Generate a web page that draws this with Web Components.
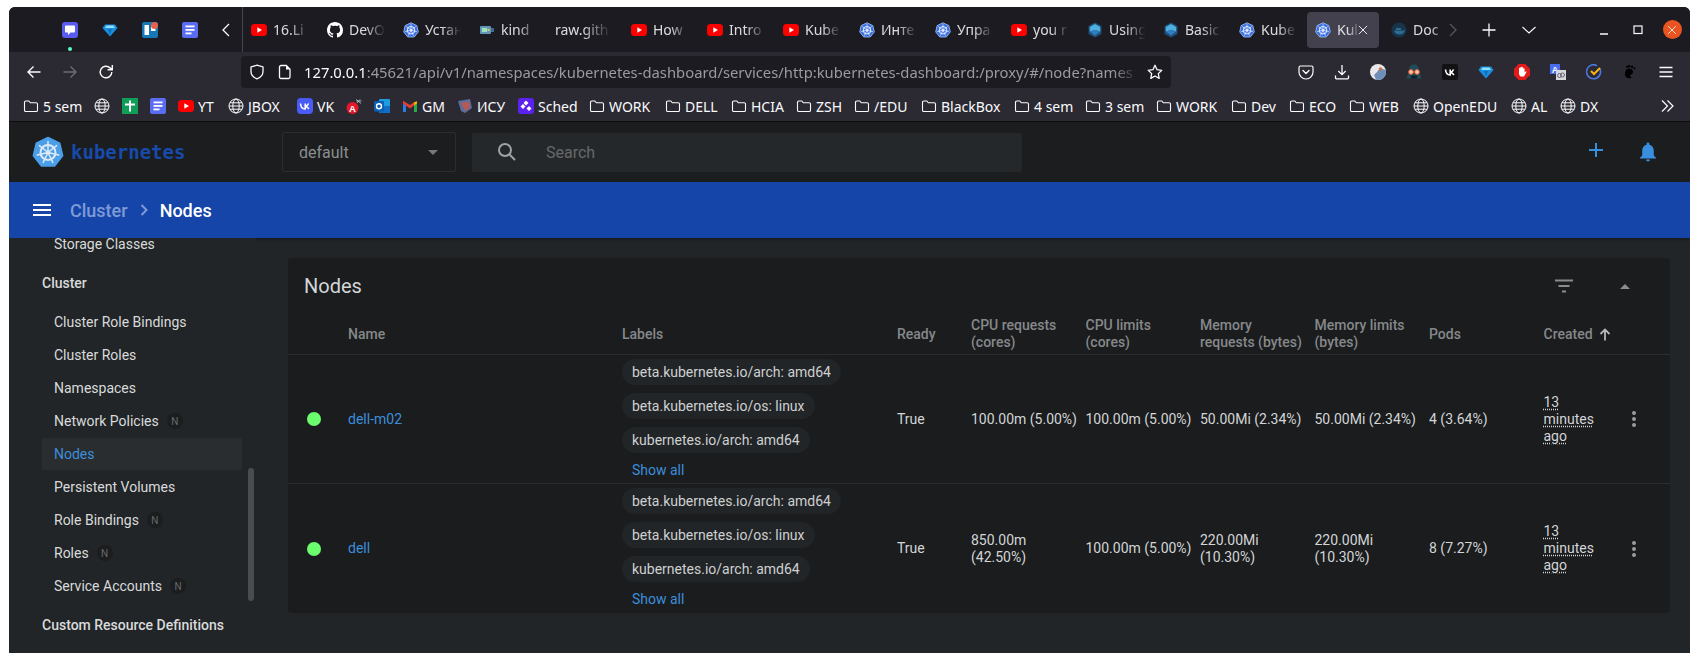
<!DOCTYPE html>
<html>
<head>
<meta charset="utf-8">
<title>Nodes - Kubernetes Dashboard</title>
<style>
    html, body { margin: 0; height: 100%; background: #fff; overflow: hidden; }
    body { padding: 7px 0 0 9px; box-sizing: border-box; }
</style>
</head>
<body>
<browser-window>
    <tab-strip>
        <browser-tab icon="yt">16.Li</browser-tab>
        <browser-tab icon="github">DevO</browser-tab>
        <browser-tab icon="k8s">Устан</browser-tab>
        <browser-tab icon="kind">kind</browser-tab>
        <browser-tab>raw.gith</browser-tab>
        <browser-tab icon="yt">How</browser-tab>
        <browser-tab icon="yt">Intro</browser-tab>
        <browser-tab icon="yt">Kube</browser-tab>
        <browser-tab icon="k8s">Инте</browser-tab>
        <browser-tab icon="k8s">Упра</browser-tab>
        <browser-tab icon="yt">you r</browser-tab>
        <browser-tab icon="cube">Using</browser-tab>
        <browser-tab icon="cube">Basic</browser-tab>
        <browser-tab icon="k8s">Kube</browser-tab>
        <browser-tab icon="k8s" active>Kul</browser-tab>
        <browser-tab icon="docker">Doc</browser-tab>
    </tab-strip>
    <nav-bar></nav-bar>
    <bookmark-bar>
        <book-mark icon="folder" w="39">5 sem</book-mark>
        <book-mark icon="globe"></book-mark>
        <book-mark icon="tasks"></book-mark>
        <book-mark icon="docs"></book-mark>
        <book-mark icon="yt" w="18">YT</book-mark>
        <book-mark icon="globe" w="37">JBOX</book-mark>
        <book-mark icon="vk" w="17">VK</book-mark>
        <book-mark icon="acro"></book-mark>
        <book-mark icon="outlook"></book-mark>
        <book-mark icon="gmail" w="23">GM</book-mark>
        <book-mark icon="isu" w="29">ИСУ</book-mark>
        <book-mark icon="sched" w="39">Sched</book-mark>
        <book-mark icon="folder" w="44">WORK</book-mark>
        <book-mark icon="folder" w="34">DELL</book-mark>
        <book-mark icon="folder" w="33">HCIA</book-mark>
        <book-mark icon="folder" w="26">ZSH</book-mark>
        <book-mark icon="folder" w="35">/EDU</book-mark>
        <book-mark icon="folder" w="61">BlackBox</book-mark>
        <book-mark icon="folder" w="39">4 sem</book-mark>
        <book-mark icon="folder" w="39">3 sem</book-mark>
        <book-mark icon="folder" w="43">WORK</book-mark>
        <book-mark icon="folder" w="26">Dev</book-mark>
        <book-mark icon="folder" w="28">ECO</book-mark>
        <book-mark icon="folder" w="32">WEB</book-mark>
        <book-mark icon="globe" w="66">OpenEDU</book-mark>
        <book-mark icon="globe" w="17">AL</book-mark>
        <book-mark icon="globe" w="19">DX</book-mark>
    </bookmark-bar>
    <kd-header></kd-header>
    <kd-toolbar></kd-toolbar>
    <kd-body>
        <kd-sidebar slot="side">
            <side-item>Storage Classes</side-item>
            <side-item heading>Cluster</side-item>
            <side-item>Cluster Role Bindings</side-item>
            <side-item>Cluster Roles</side-item>
            <side-item>Namespaces</side-item>
            <side-item badge>Network Policies</side-item>
            <side-item active>Nodes</side-item>
            <side-item>Persistent Volumes</side-item>
            <side-item badge>Role Bindings</side-item>
            <side-item badge>Roles</side-item>
            <side-item badge>Service Accounts</side-item>
            <side-item heading>Custom Resource Definitions</side-item>
        </kd-sidebar>
        <node-card>
            <node-row name="dell-m02" cpu-req="100.00m (5.00%)" cpu-lim="100.00m (5.00%)" mem-req="50.00Mi (2.34%)" mem-lim="50.00Mi (2.34%)" pods="4 (3.64%)"></node-row>
            <node-row name="dell" cpu-req="850.00m (42.50%)" cpu-lim="100.00m (5.00%)" mem-req="220.00Mi (10.30%)" mem-lim="220.00Mi (10.30%)" pods="8 (7.27%)"></node-row>
        </node-card>
    </kd-body>
</browser-window>

<script>
const K8S_WHEEL = (color) => `
    <circle cx="16" cy="16.5" r="7.5" fill="none" stroke="${color}" stroke-width="2"/>
    <circle cx="16" cy="16.5" r="2" fill="${color}"/>
    <path d="M16 16.5V5.5M16 16.5L24.6 9.65M16 16.5L26.7 19M16 16.5L20.8 26.4M16 16.5L11.2 26.4M16 16.5L5.3 19M16 16.5L7.4 9.65" stroke="${color}" stroke-width="1.5" stroke-linecap="round"/>`;
const HEPTAGON = 'M16 1.5L27.7 7.15L30.6 19.8L22.5 30H9.5L1.4 19.8L4.3 7.15Z';
const VK_MARK = 'M3.5 5.5c.3 3.4 2 5.5 4.7 5.5V5.5M8.4 8.2c1.5-.2 2.6-1.3 3.2-2.7M8.4 8.2c1.6.2 2.7 1.3 3.5 2.8';

const ICONS = {
    chat: `<rect width="16" height="16" rx="3" fill="#5a5cf0"/><path d="M4 3.5h8a1 1 0 0 1 1 1v5a1 1 0 0 1-1 1H8.5L6 13v-2.5H4a1 1 0 0 1-1-1v-5a1 1 0 0 1 1-1z" fill="#fff"/>`,
    diamond: `<path d="M3 2.5h10l2.5 3.5L8 14.5.5 6z" fill="#1a8fdf"/><path d="M4.5 3.5h7L13 6H3z" fill="#8fe0ff"/><path d="M6 7h4L8 12.5z" fill="#0c6fc0"/>`,
    trello: `<rect width="16" height="16" rx="2" fill="#1577b5"/><rect x="2.5" y="3" width="4.5" height="10" fill="#fff"/><rect x="9" y="3" width="4.5" height="6" fill="#fff"/><circle cx="12.5" cy="3.5" r="3.5" fill="#e8604c"/>`,
    docs: `<rect width="16" height="16" rx="2" fill="#5a6cf2"/><rect x="3.5" y="3.5" width="9" height="1.8" fill="#fff"/><rect x="3.5" y="7" width="9" height="1.8" fill="#fff"/><rect x="3.5" y="10.5" width="6" height="1.8" fill="#fff"/>`,
    yt: `<rect y="2" width="16" height="12" rx="3.5" fill="#f00"/><path d="M6.3 5.2L11 8L6.3 10.8z" fill="#fff"/>`,
    github: `<path fill="#fff" d="M8 0C3.58 0 0 3.58 0 8c0 3.54 2.29 6.53 5.47 7.59.4.07.55-.17.55-.38 0-.19-.01-.82-.01-1.49-2.01.37-2.53-.49-2.69-.94-.09-.23-.48-.94-.82-1.13-.28-.15-.68-.52-.01-.53.63-.01 1.08.58 1.23.82.72 1.21 1.87.87 2.33.66.07-.52.28-.87.51-1.07-1.78-.2-3.64-.89-3.64-3.95 0-.87.31-1.59.82-2.15-.08-.2-.36-1.02.08-2.12 0 0 .67-.21 2.2.82.64-.18 1.32-.27 2-.27.68 0 1.36.09 2 .27 1.53-1.04 2.2-.82 2.2-.82.44 1.1.16 1.92.08 2.12.51.56.82 1.27.82 2.15 0 3.07-1.87 3.75-3.65 3.95.29.25.54.73.54 1.48 0 1.07-.01 1.93-.01 2.2 0 .21.15.46.55.38A8.013 8.013 0 0016 8c0-4.42-3.58-8-8-8z"/>`,
    k8s: `<svg viewBox="0 0 32 32" width="16" height="16"><path d="${HEPTAGON}" fill="#3a6fe2" stroke="#a9c6f7" stroke-width="1.6" stroke-linejoin="round"/>${K8S_WHEEL('#eaf1fe')}</svg>`,
    logo: `<svg viewBox="0 0 32 32" width="32" height="32"><path d="${HEPTAGON}" fill="#4b9fe9" stroke="#4b9fe9" stroke-width="1.6" stroke-linejoin="round"/>${K8S_WHEEL('#dfe9f5')}</svg>`,
    kind: `<rect x="1" y="4" width="11" height="8" rx="1" fill="#5f97b5"/><rect x="3" y="6" width="5" height="4" fill="#9fe0c0"/><rect x="12" y="6" width="3" height="4" fill="#3d6d8a"/><rect x="8.5" y="7" width="2" height="2" fill="#e8c860"/>`,
    cube: `<path d="M8 .5L14.5 4v8L8 15.5 1.5 12V4z" fill="#1f4f7a"/><path d="M8 2l5.2 3v4.4L8 8 2.8 9.4V5z" fill="#4fb0e0"/><path d="M2.8 9.4L8 8l5.2 1.4L8 13.5z" fill="#2f7fc0"/>`,
    docker: `<circle cx="8" cy="8" r="7.6" fill="#16344a"/><path d="M3 8.5h9.5c.8 0 1.2-.6 1.5-1-.1 3-2.6 5-5.5 5S3.5 11 3 8.5z" fill="#2f6a8f"/><rect x="5" y="6" width="5" height="2" fill="#2f6a8f"/>`,
    folder: `<path d="M1.5 4.3a1.3 1.3 0 0 1 1.3-1.3h3l1.5 1.8h5.9a1.3 1.3 0 0 1 1.3 1.3v6.1a1.3 1.3 0 0 1-1.3 1.3H2.8a1.3 1.3 0 0 1-1.3-1.3z" fill="none" stroke="#fbfbfe" stroke-width="1.1"/>`,
    globe: `<g fill="none" stroke="#fbfbfe" stroke-width="1"><circle cx="8" cy="8" r="7"/><ellipse cx="8" cy="8" rx="3.2" ry="7"/><path d="M1 8h14M2 4.8h12M2 11.2h12"/></g>`,
    tasks: `<rect width="16" height="16" fill="#0f9d58"/><rect x="7" y="2.5" width="2" height="11" fill="#fff"/><rect x="3" y="5.5" width="10" height="2" fill="#fff"/>`,
    vk: `<rect width="16" height="16" rx="4" fill="#4a5cf8"/><path d="${VK_MARK}" fill="none" stroke="#fff" stroke-width="1.5"/>`,
    acro: `<circle cx="6.5" cy="10" r="6" fill="#e5172b"/><text x="6.5" y="13.5" font-size="9.5" font-weight="700" font-family="Liberation Sans" text-anchor="middle" fill="#fff">A</text><path d="M10 1.5l5 4M11 5l3-3.5M10.5 3h5" stroke="#c9c9c9" stroke-width=".8"/>`,
    outlook: `<rect x="5" y="1" width="11" height="14" rx="1" fill="#1f9be0"/><rect x="5" y="8" width="11" height="7" fill="#0f6fc6"/><rect y="3" width="10" height="10.5" rx="1" fill="#0a5fb4"/><circle cx="5" cy="8.2" r="2.5" fill="none" stroke="#fff" stroke-width="1.4"/>`,
    gmail: `<path d="M1 4.5V14h3V7.5z" fill="#2c7ce5"/><path d="M12 7.5V14h3V4.5z" fill="#2ba84a"/><path d="M1 2.8v2.7L8 10.5l4-3V4.2L8 7z" fill="#e43d30"/><path d="M12 4.2v3.3l3-2V3.2z" fill="#f5b400"/>`,
    isu: `<path d="M1 3L13 1l2 9-7 5-4-2z" fill="#5a6e9c"/><path d="M4 5l8-1.5 1 6L8 13z" fill="#b65a55"/>`,
    sched: `<rect width="16" height="16" rx="3" fill="#5a21ef"/><path d="M8 2.5l2.5 2.5L8 7.5 5.5 5zM5 6l2.5 2.5L5 11 2.5 8.5zM11 8l2.5 2.5L11 13 8.5 10.5z" fill="#fff"/>`,
    back: `<path d="M14.5 8H2M7.5 2.5L2 8l5.5 5.5" fill="none" stroke="#fbfbfe" stroke-width="1.4"/>`,
    forward: `<path d="M1.5 8H14M8.5 2.5L14 8l-5.5 5.5" fill="none" stroke="#6d6d75" stroke-width="1.4"/>`,
    reload: `<path d="M13.8 8a5.8 5.8 0 1 1-1.7-4.1L14 5.5M14.3 1v4.7H9.6" fill="none" stroke="#fbfbfe" stroke-width="1.4"/>`,
    shield: `<path d="M8 1.2l6 1.8v4.5c0 3.6-2.5 6-6 7.3-3.5-1.3-6-3.7-6-7.3V3z" fill="none" stroke="#fbfbfe" stroke-width="1.3"/>`,
    page: `<path d="M4 1.5h5.3L13 5.2V13a1.5 1.5 0 0 1-1.5 1.5H4A1.5 1.5 0 0 1 2.5 13V3A1.5 1.5 0 0 1 4 1.5z" fill="none" stroke="#fbfbfe" stroke-width="1.3"/><path d="M9 1.5l4 4H9z" fill="#fbfbfe"/>`,
    star: `<path d="M8 1.3l2.05 4.4 4.75.6-3.5 3.3.9 4.8L8 12.05 3.8 14.4l.9-4.8-3.5-3.3 4.75-.6z" fill="none" stroke="#fbfbfe" stroke-width="1.3" stroke-linejoin="round"/>`,
    pocket: `<path d="M2.5 2h11A1.5 1.5 0 0 1 15 3.5V8A7 7 0 0 1 1 8V3.5A1.5 1.5 0 0 1 2.5 2z" fill="none" stroke="#fbfbfe" stroke-width="1.2"/><path d="M5 6.5l3 3 3-3" fill="none" stroke="#fbfbfe" stroke-width="1.4" stroke-linecap="round"/>`,
    download: `<path d="M8 1v9.5M4.3 7L8 10.7 11.7 7M1.5 11.5V14a.8.8 0 0 0 .8.8h11.4a.8.8 0 0 0 .8-.8v-2.5" fill="none" stroke="#fbfbfe" stroke-width="1.3"/>`,
    photo: `<circle cx="8" cy="8" r="8" fill="#e8e8ea"/><path d="M8 16c4.4 0 8-3.6 8-8 0-.7-.1-1.3-.3-2L10 4 7 8l-3 3 2 4.8z" fill="#6f8fb8"/><circle cx="10.5" cy="5" r="1.8" fill="#c8734f"/>`,
    owl: `<path d="M8 .5c3.5 0 5 2.5 5 5.5l2.5 8.5h-15L3 6c0-3 1.5-5.5 5-5.5z" fill="#1e4c58"/><circle cx="5" cy="8" r="2.4" fill="#f2c8a8" stroke="#e0502c" stroke-width="1"/><circle cx="11" cy="8" r="2.4" fill="#f2c8a8" stroke="#e0502c" stroke-width="1"/><rect x="5" y="11.5" width="6" height="3" fill="#0f2228"/>`,
    vkdark: `<rect width="16" height="16" rx="2" fill="#121214"/><path d="${VK_MARK}" fill="none" stroke="#fff" stroke-width="1.6"/>`,
    stop: `<path d="M4.7 0h6.6L16 4.7v6.6L11.3 16H4.7L0 11.3V4.7z" fill="#e21a1a"/><path d="M5 7V4.5a.7.7 0 0 1 1.4 0v-1a.7.7 0 0 1 1.4 0v.2a.7.7 0 0 1 1.4 0V5a.7.7 0 0 1 1.4 0v3.5l1-1c.6-.4 1.2.2.8.8L10 12.5H6.5L5 10.5z" fill="#fff"/>`,
    translate: `<rect x="0" y="0" width="10" height="10" fill="#4a6cf0"/><text x="5" y="8.5" font-size="9" font-weight="700" font-family="Liberation Sans" text-anchor="middle" fill="#fff">A</text><rect x="6" y="6" width="10" height="10" fill="#d6d8da"/><circle cx="9.5" cy="11.5" r="2" fill="none" stroke="#667" stroke-width="1"/><circle cx="12.5" cy="11" r="2" fill="none" stroke="#667" stroke-width="1"/>`,
    tick: `<path d="M14 5A7 7 0 1 1 10.5 1.4" fill="none" stroke="#4a78e0" stroke-width="1.6" stroke-linecap="round"/><path d="M5 7l3 3 6-6" fill="none" stroke="#f7b21a" stroke-width="2"/>`,
    gnome: `<path d="M6.5 4.5c2.5 0 5 1.5 4.5 4-.4 1.8-2.5 1.6-2.8 3-.3 1.3 1.3 1.7 1.8 1.5-1.2 1.5-5 2-6.5-.7-1.6-3 .5-7.8 3-7.8z" fill="#000"/><circle cx="7" cy="2.3" r="1.3" fill="#000"/><circle cx="10" cy="2.8" r="1.2" fill="#000"/><circle cx="12.4" cy="4.3" r="1.1" fill="#000"/><circle cx="4.8" cy="2.8" r="1" fill="#000"/>`,
    menu: `<path d="M1.5 3.5h13M1.5 8h13M1.5 12.5h13" stroke="#fbfbfe" stroke-width="1.4"/>`,
    left: `<path d="M11 2L5 8l6 6" fill="none" stroke="#fbfbfe" stroke-width="1.3"/>`,
    right: `<path d="M5 2l6 6-6 6" fill="none" stroke="#55555c" stroke-width="1.3"/>`,
    plus: `<path d="M8 1.5v13M1.5 8h13" stroke="#fbfbfe" stroke-width="1.3"/>`,
    down: `<path d="M1.5 5L8 11l6.5-6" fill="none" stroke="#fbfbfe" stroke-width="1.1"/>`,
    close: `<path d="M2.5 2.5l11 11M13.5 2.5l-11 11" stroke="#fbfbfe" stroke-width="1.2"/>`,
    min: `<path d="M4 12h8" stroke="#fbfbfe" stroke-width="1.4"/>`,
    max: `<rect x="4" y="4" width="8" height="7.5" fill="none" stroke="#fbfbfe" stroke-width="1.2"/>`,
    chevrons: `<path d="M2 2.5L7.5 8 2 13.5M7.5 2.5L13 8l-5.5 5.5" fill="none" stroke="#fbfbfe" stroke-width="1.2"/>`,
};

class AppIcon extends HTMLElement {
    constructor() {
        super();
        this.attachShadow({ mode: 'open' });
    }

    connectedCallback() {
        const body = ICONS[this.getAttribute('name')] || '';
        const inner = body.startsWith('<svg') ? body : `<svg viewBox="0 0 16 16" width="16" height="16">${body}</svg>`;
        this.shadowRoot.innerHTML = `
            <style>
                :host { display: inline-flex; align-items: center; justify-content: center; flex: none; }
                svg { display: block; }
            </style>
            ${inner}
        `;
    }
}
customElements.define('app-icon', AppIcon);

class BrowserWindow extends HTMLElement {
    constructor() {
        super();
        this.attachShadow({ mode: 'open' });
        this.shadowRoot.innerHTML = `
            <style>
                :host {
                    display: flex;
                    flex-direction: column;
                    width: 1681px;
                    height: 646px;
                    border-radius: 6px 6px 0 0;
                    overflow: hidden;
                    background: #212527;
                }
            </style>
            <slot></slot>
        `;
    }
}
customElements.define('browser-window', BrowserWindow);

class TabStrip extends HTMLElement {
    constructor() {
        super();
        this.attachShadow({ mode: 'open' });
        this.shadowRoot.innerHTML = `
            <style>
                :host {
                    display: flex;
                    align-items: center;
                    height: 45px;
                    flex: none;
                    background: #1c1b22;
                    padding-left: 41px;
                    box-sizing: border-box;
                }
                .pin { width: 40px; height: 100%; display: flex; align-items: center; justify-content: center; position: relative; flex: none; }
                .dot { position: absolute; left: 18px; top: 40px; width: 4px; height: 4px; border-radius: 50%; background: #54ffbd; }
                .arrow { width: 32px; height: 100%; display: flex; align-items: center; justify-content: center; flex: none; }
                .sep { width: 1px; height: 100%; background: #45454c; flex: none; }
                .tabs { display: flex; gap: 4px; width: 1202px; overflow: hidden; flex: none; }
                .more { width: 16px; flex: none; }
                .btn { width: 32px; display: flex; justify-content: center; flex: none; }
                .win { display: flex; margin-left: auto; padding-right: 1px; }
                .win div { width: 34px; height: 34px; display: flex; align-items: center; justify-content: center; }
                .x { width: 19px; height: 19px; border-radius: 50%; background: #e95420; display: flex; align-items: center; justify-content: center; }
            </style>
            <div class="pin"><app-icon name="chat"></app-icon><span class="dot"></span></div>
            <div class="pin"><app-icon name="diamond"></app-icon></div>
            <div class="pin"><app-icon name="trello"></app-icon></div>
            <div class="pin"><app-icon name="docs"></app-icon></div>
            <div class="arrow"><app-icon name="left"></app-icon></div>
            <div class="sep"></div>
            <div class="tabs"><slot></slot></div>
            <app-icon class="more" name="right"></app-icon>
            <div class="btn" style="margin-left: 12px"><app-icon name="plus"></app-icon></div>
            <div class="btn" style="margin-left: 8px"><app-icon name="down"></app-icon></div>
            <div class="win">
                <div><app-icon name="min"></app-icon></div>
                <div><app-icon name="max"></app-icon></div>
                <div><span class="x"><app-icon name="close" style="transform: scale(.7)"></app-icon></span></div>
            </div>
        `;
    }
}
customElements.define('tab-strip', TabStrip);

class BrowserTab extends HTMLElement {
    constructor() {
        super();
        this.attachShadow({ mode: 'open' });
    }

    connectedCallback() {
        const icon = this.getAttribute('icon');
        const active = this.hasAttribute('active');
        this.shadowRoot.innerHTML = `
            <style>
                :host {
                    display: flex;
                    align-items: center;
                    gap: 6px;
                    flex: none;
                    width: 72px;
                    height: 36px;
                    box-sizing: border-box;
                    padding-left: 8px;
                    padding-right: ${active ? '18px' : '4px'};
                    border-radius: 4px;
                    background: ${active ? '#42414d' : 'transparent'};
                    color: #fbfbfe;
                    font: 14px 'Noto Sans', sans-serif;
                    position: relative;
                }
                .title {
                    flex: 1;
                    min-width: 0;
                    overflow: hidden;
                    white-space: nowrap;
                    -webkit-mask-image: linear-gradient(to right, rgba(0, 0, 0, .85) 45%, transparent 95%);
                    mask-image: linear-gradient(to right, rgba(0, 0, 0, .85) 45%, transparent 95%);
                }
                .close { position: absolute; right: 8px; top: 10px; transform: scale(.75); }
            </style>
            ${icon ? `<app-icon name="${icon}"></app-icon>` : ''}
            <span class="title"><slot></slot></span>
            ${active ? '<app-icon class="close" name="close"></app-icon>' : ''}
        `;
    }
}
customElements.define('browser-tab', BrowserTab);

class NavBar extends HTMLElement {
    constructor() {
        super();
        this.attachShadow({ mode: 'open' });
        const right = ['pocket', 'download', 'photo', 'owl', 'vkdark', 'diamond', 'stop', 'translate', 'tick', 'gnome', 'menu'];
        this.shadowRoot.innerHTML = `
            <style>
                :host {
                    display: flex;
                    align-items: center;
                    height: 40px;
                    flex: none;
                    background: #2b2a33;
                    padding: 0 6px 0 7px;
                    box-sizing: border-box;
                }
                .cell { width: 36px; display: flex; justify-content: center; flex: none; }
                .url {
                    display: flex;
                    align-items: center;
                    width: 930px;
                    height: 32px;
                    margin-left: 117px;
                    background: #1c1b22;
                    border-radius: 4px;
                    padding: 0 8px;
                    box-sizing: border-box;
                    color: #fbfbfe;
                    font: 14.8px 'Noto Sans', sans-serif;
                    flex: none;
                }
                .shield { margin-right: 12px; }
                .page { margin-right: 11px; }
                .text {
                    flex: 1;
                    min-width: 0;
                    overflow: hidden;
                    white-space: nowrap;
                    color: #9a9aa0;
                    -webkit-mask-image: linear-gradient(to right, #000 97%, transparent);
                    mask-image: linear-gradient(to right, #000 97%, transparent);
                }
                .text b { font-weight: 400; color: #fbfbfe; }
                .star { margin-left: 8px; }
                .right { display: flex; margin-left: auto; }
            </style>
            <div class="cell"><app-icon name="back"></app-icon></div>
            <div class="cell"><app-icon name="forward"></app-icon></div>
            <div class="cell"><app-icon name="reload"></app-icon></div>
            <div class="url">
                <app-icon class="shield" name="shield"></app-icon>
                <app-icon class="page" name="page"></app-icon>
                <span class="text"><b>127.0.0.1</b>:45621/api/v1/namespaces/kubernetes-dashboard/services/http:kubernetes-dashboard:/proxy/#/node?names</span>
                <app-icon class="star" name="star"></app-icon>
            </div>
            <div class="right">
                ${right.map((n) => `<div class="cell"><app-icon name="${n}"></app-icon></div>`).join('')}
            </div>
        `;
    }
}
customElements.define('nav-bar', NavBar);

class BookmarkBar extends HTMLElement {
    constructor() {
        super();
        this.attachShadow({ mode: 'open' });
        this.shadowRoot.innerHTML = `
            <style>
                :host {
                    display: flex;
                    align-items: center;
                    gap: 12px;
                    height: 30px;
                    flex: none;
                    background: #2b2a33;
                    border-bottom: 1px solid #0c0c0d;
                    padding: 0 14px 1px 14px;
                    box-sizing: border-box;
                }
                .more { margin-left: auto; }
            </style>
            <slot></slot>
            <app-icon class="more" name="chevrons"></app-icon>
        `;
    }
}
customElements.define('bookmark-bar', BookmarkBar);

class BookMark extends HTMLElement {
    constructor() {
        super();
        this.attachShadow({ mode: 'open' });
    }

    connectedCallback() {
        const w = this.getAttribute('w');
        this.shadowRoot.innerHTML = `
            <style>
                :host {
                    display: flex;
                    align-items: center;
                    gap: 4px;
                    flex: none;
                    color: #fbfbfe;
                    font: 14px 'Noto Sans', sans-serif;
                }
                span { display: block; width: ${w}px; white-space: nowrap; }
            </style>
            <app-icon name="${this.getAttribute('icon')}"></app-icon>
            ${w ? '<span><slot></slot></span>' : ''}
        `;
    }
}
customElements.define('book-mark', BookMark);

class KdHeader extends HTMLElement {
    constructor() {
        super();
        this.attachShadow({ mode: 'open' });
        this.shadowRoot.innerHTML = `
            <style>
                :host {
                    display: flex;
                    align-items: center;
                    height: 60px;
                    flex: none;
                    background: #1b1d1f;
                    padding: 0 16px 0 23px;
                    box-sizing: border-box;
                    font-family: Roboto, sans-serif;
                }
                .brand { display: flex; align-items: center; gap: 7px; width: 250px; flex: none; }
                .name { font: 700 19px 'DejaVu Sans Mono', monospace; color: #174aaa; }
                .select {
                    display: flex;
                    align-items: center;
                    justify-content: space-between;
                    width: 174px;
                    height: 40px;
                    box-sizing: border-box;
                    border: 1px solid #2b2e30;
                    border-radius: 2px;
                    padding: 0 17px 0 16px;
                    color: #8b8d8e;
                    font-size: 16px;
                    flex: none;
                }
                .caret { width: 0; height: 0; border: 5px solid transparent; border-top-color: #75777a; border-bottom: 0; }
                .search {
                    display: flex;
                    align-items: center;
                    width: 550px;
                    height: 39px;
                    margin-left: 16px;
                    background: #25282a;
                    border-radius: 2px;
                    color: #66696b;
                    font-size: 16px;
                    padding-left: 25px;
                    box-sizing: border-box;
                    flex: none;
                }
                .search svg { margin-right: 29px; }
                .actions { display: flex; margin-left: auto; }
                .actions div { width: 52px; display: flex; justify-content: center; }
            </style>
            <div class="brand"><app-icon name="logo"></app-icon><span class="name">kubernetes</span></div>
            <div class="select"><span>default</span><span class="caret"></span></div>
            <div class="search">
                <svg width="20" height="20" viewBox="0 0 20 20"><circle cx="8" cy="8" r="6" fill="none" stroke="#a0a2a3" stroke-width="2"/><path d="M12.5 12.5L18 18" stroke="#a0a2a3" stroke-width="2"/></svg>
                <span>Search</span>
            </div>
            <div class="actions">
                <div><svg width="16" height="16" viewBox="0 0 16 16"><path d="M8 1v14M1 8h14" stroke="#3a8ee0" stroke-width="2"/></svg></div>
                <div><svg width="18" height="20" viewBox="0 0 18 20"><path d="M9 .5c.8 0 1.4.6 1.4 1.4v.8c2.600.7 4.400 2.900 4.400 5.800v5l2.200 2.200v.8H1v-.8l2.200-2.200v-5c0-2.900 1.800-5.100 4.400-5.800v-.8C7.600 1.100 8.200.5 9 .5zM7 17.500h4a2 2 0 0 1-4 0z" fill="#3a8ee0"/></svg></div>
            </div>
        `;
    }
}
customElements.define('kd-header', KdHeader);

class KdToolbar extends HTMLElement {
    constructor() {
        super();
        this.attachShadow({ mode: 'open' });
        this.shadowRoot.innerHTML = `
            <style>
                :host {
                    display: flex;
                    align-items: center;
                    height: 56px;
                    flex: none;
                    background: #1645a9;
                    padding-left: 24px;
                    box-sizing: border-box;
                    font: 500 18px Roboto, sans-serif;
                    color: #fff;
                    position: relative;
                    box-shadow: 0 1px 3px rgba(0, 0, 0, .4);
                }
                svg.menu { margin-right: 19px; }
                .parent { color: #7f9bd6; }
                svg.chev { margin: 0 9px 0 9px; }
            </style>
            <svg class="menu" width="18" height="12" viewBox="0 0 18 12"><path d="M0 1h18M0 6h18M0 11h18" stroke="#fff" stroke-width="2"/></svg>
            <span class="parent">Cluster</span>
            <svg class="chev" width="14" height="14" viewBox="0 0 14 14"><path d="M4.5 2l5 5-5 5" fill="none" stroke="#7f9bd6" stroke-width="2"/></svg>
            <span>Nodes</span>
        `;
    }
}
customElements.define('kd-toolbar', KdToolbar);

class KdBody extends HTMLElement {
    constructor() {
        super();
        this.attachShadow({ mode: 'open' });
        this.shadowRoot.innerHTML = `
            <style>
                :host { display: flex; flex: 1; min-height: 0; background: #212527; }
                main { flex: 1; min-width: 0; padding: 20px 20px 0 32px; }
            </style>
            <slot name="side"></slot>
            <main><slot></slot></main>
        `;
    }
}
customElements.define('kd-body', KdBody);

class KdSidebar extends HTMLElement {
    constructor() {
        super();
        this.attachShadow({ mode: 'open' });
        this.shadowRoot.innerHTML = `
            <style>
                :host {
                    display: block;
                    width: 247px;
                    flex: none;
                    overflow: hidden;
                    position: relative;
                    background: #212527;
                    font: 14px Roboto, sans-serif;
                }
                .list { margin-top: -10.5px; padding-left: 33px; }
                .thumb {
                    position: absolute;
                    left: 239px;
                    top: 230px;
                    width: 6px;
                    height: 133px;
                    border-radius: 3px;
                    background: #494d50;
                }
            </style>
            <div class="list"><slot></slot></div>
            <div class="thumb"></div>
        `;
    }
}
customElements.define('kd-sidebar', KdSidebar);

class SideItem extends HTMLElement {
    constructor() {
        super();
        this.attachShadow({ mode: 'open' });
    }

    connectedCallback() {
        const heading = this.hasAttribute('heading');
        const active = this.hasAttribute('active');
        this.shadowRoot.innerHTML = `
            <style>
                :host {
                    display: flex;
                    align-items: center;
                    width: 200px;
                    height: ${active ? '32px' : '33px'};
                    ${active ? 'margin-bottom: 1px;' : ''}
                    ${heading ? 'margin: 6px 0;' : ''}
                    box-sizing: border-box;
                    padding-left: ${heading ? '0' : '12px'};
                    white-space: nowrap;
                    border-radius: 2px;
                    font-weight: ${heading ? 500 : 400};
                    color: ${active ? '#3d8edb' : '#d9dadb'};
                    background: ${active ? '#292d30' : 'transparent'};
                }
                .n {
                    width: 16px;
                    height: 16px;
                    margin-left: 8px;
                    border-radius: 50%;
                    background: #1b1d1f;
                    color: #666a6c;
                    font-size: 10px;
                    display: flex;
                    align-items: center;
                    justify-content: center;
                }
            </style>
            <slot></slot>
            ${this.hasAttribute('badge') ? '<span class="n">N</span>' : ''}
        `;
    }
}
customElements.define('side-item', SideItem);

class NodeCard extends HTMLElement {
    constructor() {
        super();
        this.attachShadow({ mode: 'open' });
        this.shadowRoot.innerHTML = `
            <style>
                :host {
                    display: block;
                    height: 355px;
                    background: #1a1c1e;
                    border-radius: 4px;
                    font: 14px/17px Roboto, sans-serif;
                    --cols: 60px 274px 275px 74px 114.5px 114.5px 114.5px 114.5px 114.5px 74px 1fr;
                }
                .title {
                    display: flex;
                    align-items: center;
                    height: 56px;
                    padding: 0 0 0 16px;
                    font-size: 20px;
                    color: #d3d5d6;
                    box-sizing: border-box;
                }
                .tools { display: flex; align-items: center; margin-left: auto; }
                .tools svg { display: block; }
                .caret { width: 0; height: 0; margin: 0 40px 0 46px; border: 5.5px solid transparent; border-bottom-color: #8a8c8d; border-top: 0; }
                .head {
                    display: grid;
                    grid-template-columns: var(--cols);
                    align-items: center;
                    height: 41px;
                    box-sizing: border-box;
                    border-bottom: 1px solid #2a2d2f;
                    font-weight: 500;
                    color: #86888a;
                }
                .head div { padding-right: 8px; }
                .head .sort { display: flex; align-items: center; gap: 6px; padding: 0; white-space: nowrap; }
            </style>
            <div class="title">
                <span>Nodes</span>
                <div class="tools">
                    <svg width="20" height="14" viewBox="0 0 20 14"><path d="M1 1.5h18M4.5 7h11M8 12.5h4" stroke="#8a8c8d" stroke-width="2"/></svg>
                    <span class="caret"></span>
                </div>
            </div>
            <div class="head">
                <div></div>
                <div>Name</div>
                <div>Labels</div>
                <div>Ready</div>
                <div>CPU requests (cores)</div>
                <div>CPU limits (cores)</div>
                <div>Memory requests (bytes)</div>
                <div>Memory limits (bytes)</div>
                <div>Pods</div>
                <div class="sort">Created <svg width="12" height="13" viewBox="0 0 12 13"><path d="M6 12.5V2M1.5 6L6 1.5 10.5 6" fill="none" stroke="#b5b7b8" stroke-width="1.8"/></svg></div>
                <div></div>
            </div>
            <slot></slot>
        `;
    }
}
customElements.define('node-card', NodeCard);

class LabelChip extends HTMLElement {
    constructor() {
        super();
        this.attachShadow({ mode: 'open' });
        this.shadowRoot.innerHTML = `
            <style>
                :host {
                    display: inline-flex;
                    align-items: center;
                    align-self: flex-start;
                    height: 26px;
                    padding: 0 10px;
                    border-radius: 13px;
                    background: #212527;
                    color: #cfd0d1;
                    white-space: nowrap;
                }
            </style>
            <slot></slot>
        `;
    }
}
customElements.define('label-chip', LabelChip);

class NodeRow extends HTMLElement {
    constructor() {
        super();
        this.attachShadow({ mode: 'open' });
    }

    connectedCallback() {
        const attr = (n) => this.getAttribute(n);
        this.shadowRoot.innerHTML = `
            <style>
                :host {
                    display: grid;
                    grid-template-columns: var(--cols);
                    align-items: center;
                    height: 129px;
                    box-sizing: border-box;
                    border-bottom: 1px solid #2a2d2f;
                    color: #d3d5d6;
                }
                :host(:last-child) { border-bottom: 0; }
                .cell { padding-right: 8px; }
                .status { padding-left: 19px; }
                .status i { display: block; width: 14px; height: 14px; border-radius: 50%; background: #6bfd6e; }
                a { color: #3d8edb; text-decoration: none; }
                .labels { display: flex; flex-direction: column; gap: 8px; align-self: start; padding-top: 4px; }
                .all { padding-left: 10px; margin-top: 1px; }
                abbr { text-decoration: underline dotted; text-underline-offset: 2px; }
                .menu { display: flex; padding-left: 4.5px; }
            </style>
            <div class="status"><i></i></div>
            <div class="cell"><a href="#">${attr('name')}</a></div>
            <div class="cell labels">
                <label-chip>beta.kubernetes.io/arch: amd64</label-chip>
                <label-chip>beta.kubernetes.io/os: linux</label-chip>
                <label-chip>kubernetes.io/arch: amd64</label-chip>
                <a class="all" href="#">Show all</a>
            </div>
            <div class="cell">True</div>
            <div class="cell">${attr('cpu-req')}</div>
            <div class="cell">${attr('cpu-lim')}</div>
            <div class="cell">${attr('mem-req')}</div>
            <div class="cell">${attr('mem-lim')}</div>
            <div class="cell">${attr('pods')}</div>
            <div class="cell" style="padding-right: 14px"><abbr>13 minutes ago</abbr></div>
            <div class="menu"><svg width="24" height="24" viewBox="0 0 24 24"><path fill="#9a9c9d" d="M12 8a2 2 0 1 0 0-4 2 2 0 0 0 0 4zm0 2a2 2 0 1 0 0 4 2 2 0 0 0 0-4zm0 6a2 2 0 1 0 0 4 2 2 0 0 0 0-4z"/></svg></div>
        `;
    }
}
customElements.define('node-row', NodeRow);
</script>
</body>
</html>
